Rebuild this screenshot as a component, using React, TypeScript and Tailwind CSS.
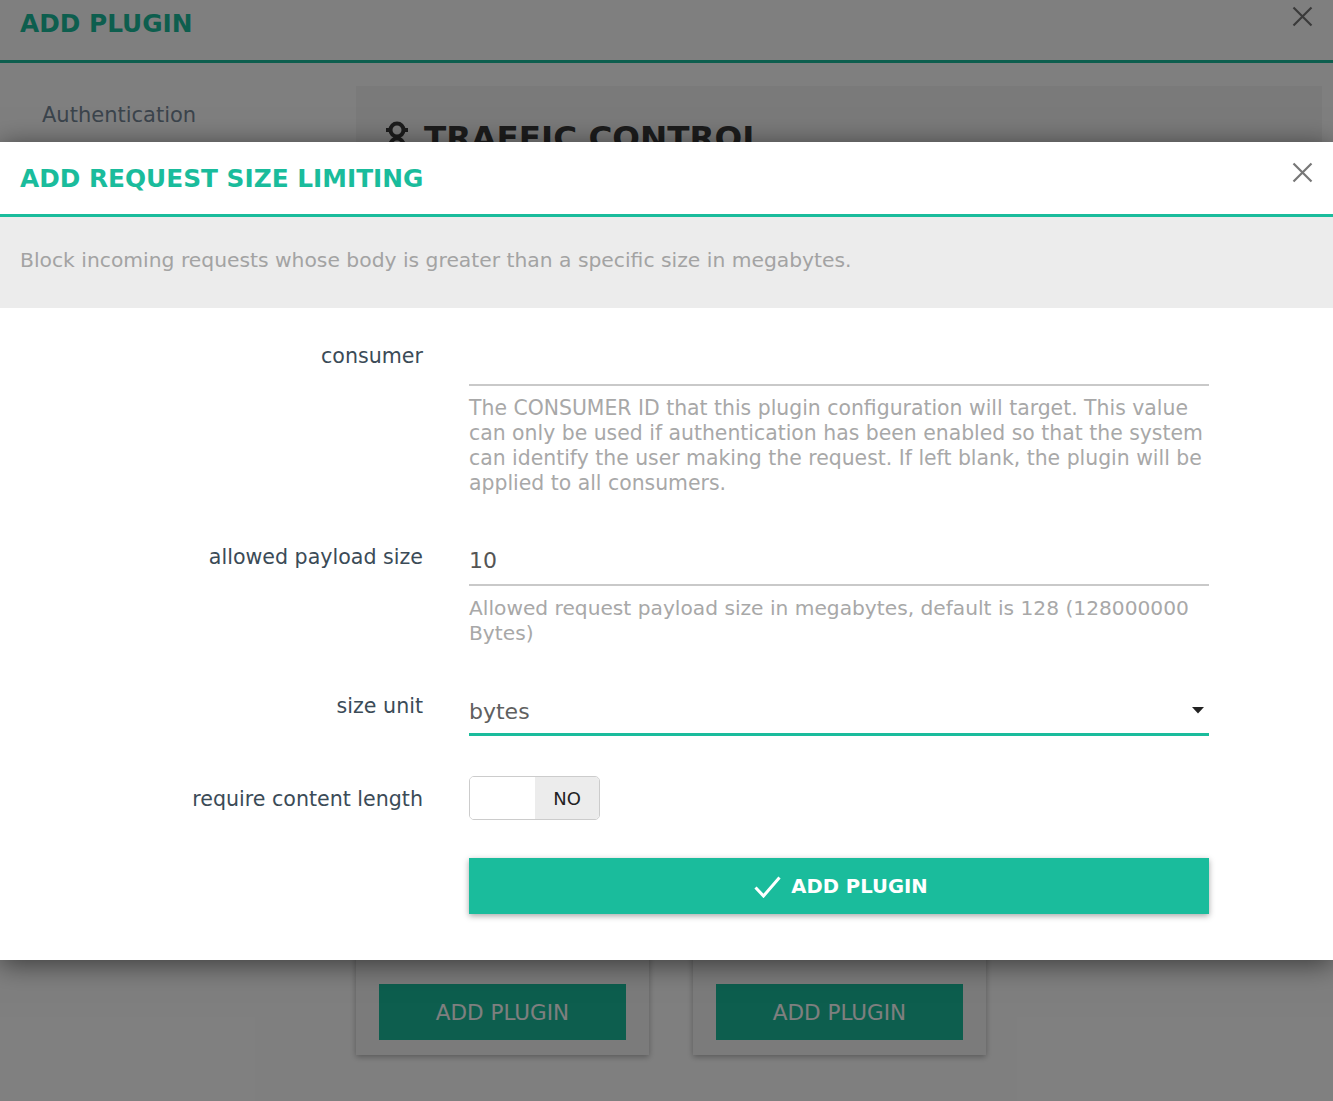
function CloseIcon({ color }: { color: string }) {
  return (
    <svg width="21" height="21" viewBox="0 0 21 21" fill="none">
      <path d="M1.5 1.5 L19.5 19.5 M19.5 1.5 L1.5 19.5" stroke={color} strokeWidth="2.2" strokeLinecap="butt" />
    </svg>
  );
}

function Caret() {
  return (
    <svg width="12" height="7" viewBox="0 0 12 7">
      <path d="M0 0 L12 0 L6 6.5 Z" fill="#222" />
    </svg>
  );
}

function Check() {
  return (
    <svg width="27" height="22" viewBox="0 0 27 22" fill="none">
      <path d="M1.5 11.5 L9.5 20 L25.5 1.5" stroke="#ffffff" strokeWidth="3" strokeLinecap="butt" strokeLinejoin="miter" />
    </svg>
  );
}

function TrafficIcon() {
  return (
    <svg width="26" height="34" viewBox="0 0 26 34" fill="none">
      <circle cx="13" cy="9" r="6.5" stroke="#383838" strokeWidth="4" />
      <circle cx="13" cy="24" r="6.5" stroke="#383838" strokeWidth="4" />
      <path d="M2 9 H5 M21 9 H24" stroke="#383838" strokeWidth="4" />
    </svg>
  );
}

function Label({ children, pt = 'pt-[8px]' }: { children: React.ReactNode; pt?: string }) {
  return (
    <div className={`w-[423px] shrink-0 text-right text-[20.6px] leading-[24px] text-[#3b4b57] ${pt}`}>{children}</div>
  );
}

export default function App() {
  return (
    <div className="relative h-[1101px] overflow-hidden bg-white font-['DejaVu_Sans',sans-serif]">
      {/* Background page */}
      <div className="flex h-[63px] items-start justify-between border-b-[3px] border-[#1abc9c] pl-5 pr-[20px]">
        <h1 className="pt-[9px] text-[24.8px] font-bold leading-[30px] text-[#1abc9c]">ADD PLUGIN</h1>
        <div className="pt-[6px]">
          <CloseIcon color="#757575" />
        </div>
      </div>
      <div className="flex">
        <aside className="w-[356px] shrink-0 pl-[42px] pt-[39px]">
          <div className="text-[21px] leading-[26px] text-[#778899]">Authentication</div>
        </aside>
        <main className="flex-1 pr-[11px] pt-[23px]">
          <div className="h-[160px] bg-[#f4f4f4] pl-[28px] pt-[33px]">
            <div className="flex items-center gap-[14px]">
              <TrafficIcon />
              <span className="text-[32.6px] font-bold leading-[38px] text-[#383838]">TRAFFIC CONTROL</span>
            </div>
          </div>
          <div className="mt-[34px] flex gap-[44px]">
            {[0, 1].map((i) => (
              <div
                key={i}
                className="flex h-[775px] w-[293px] flex-col justify-end bg-[#f6f6f6] px-[23px] pb-[15px] shadow-[0_2px_6px_rgba(0,0,0,0.3)]"
              >
                <div className="flex h-[56px] items-center justify-center bg-[#1abc9c] pt-[2px] text-[21.5px] text-white">
                  ADD PLUGIN
                </div>
              </div>
            ))}
          </div>
        </main>
      </div>

      {/* Overlay */}
      <div className="absolute inset-0 bg-black/50" />

      {/* Modal */}
      <div className="absolute left-0 right-0 top-[142px] bg-white shadow-[0_4px_26px_rgba(0,0,0,0.55)]">
        <div className="flex h-[75px] items-start justify-between border-b-[3px] border-[#1abc9c] pl-5 pr-[20px]">
          <h2 className="pt-[22px] text-[24.8px] font-bold leading-[30px] text-[#1abc9c]">ADD REQUEST SIZE LIMITING</h2>
          <div className="pt-[20px]">
            <CloseIcon color="#777777" />
          </div>
        </div>
        <div className="h-[91px] bg-[#ececec] pl-5 pt-[31px] text-[20.3px] leading-[24px] text-[#a3a3a3]">
          Block incoming requests whose body is greater than a specific size in megabytes.
        </div>

        <div className="pb-[46px] pt-[28px]">
          {/* consumer */}
          <div className="mb-[40px] flex">
            <Label>consumer</Label>
            <div className="ml-[46px] w-[740px]">
              <div className="h-[50px] border-b-2 border-[#c9c9c9]" />
              <div className="mt-[10px] whitespace-nowrap text-[20.4px] leading-[25px] text-[#a8a8a8]">
                The CONSUMER ID that this plugin configuration will target. This value
                <br />
                can only be used if authentication has been enabled so that the system
                <br />
                can identify the user making the request. If left blank, the plugin will be
                <br />
                applied to all consumers.
              </div>
            </div>
          </div>

          {/* allowed payload size */}
          <div className="mb-[40px] flex">
            <Label pt="pt-[9px]">allowed payload size</Label>
            <div className="ml-[46px] w-[740px]">
              <div className="flex h-[50px] items-center border-b-2 border-[#c9c9c9] text-[22px] text-[#555555]">10</div>
              <div className="mt-[10px] whitespace-nowrap text-[20.2px] leading-[25px] text-[#a8a8a8]">
                Allowed request payload size in megabytes, default is 128 (128000000
                <br />
                Bytes)
              </div>
            </div>
          </div>

          {/* size unit */}
          <div className="mb-[40px] flex">
            <Label>size unit</Label>
            <div className="ml-[46px] w-[740px]">
              <div className="flex h-[50px] items-center justify-between border-b-[3px] border-[#1abc9c] pt-[3px] text-[22px] text-[#606060]">
                <span>bytes</span>
                <span className="mr-[5px] flex pb-[2px]">
                  <Caret />
                </span>
              </div>
            </div>
          </div>

          {/* require content length */}
          <div className="flex">
            <Label pt="pt-[11px]">require content length</Label>
            <div className="ml-[46px] w-[740px]">
              <div className="flex h-[44px] w-[131px] overflow-hidden rounded-[5px] border border-[#cccccc]">
                <div className="w-[65px] bg-white" />
                <div className="flex flex-1 items-center justify-center bg-[#ececec] pt-[1px] text-[18px] text-[#222222]">NO</div>
              </div>
            </div>
          </div>

          {/* button */}
          <div className="mt-[38px] flex">
            <div className="w-[423px] shrink-0" />
            <div className="ml-[46px] flex h-[56px] w-[740px] items-center justify-center gap-[10px] bg-[#1abc9c] pl-[4px] pt-[2px] text-[19.6px] font-bold text-white shadow-[0_2px_6px_rgba(0,0,0,0.35)]">
              <Check />
              <span>ADD PLUGIN</span>
            </div>
          </div>
        </div>
      </div>
    </div>
  );
}
